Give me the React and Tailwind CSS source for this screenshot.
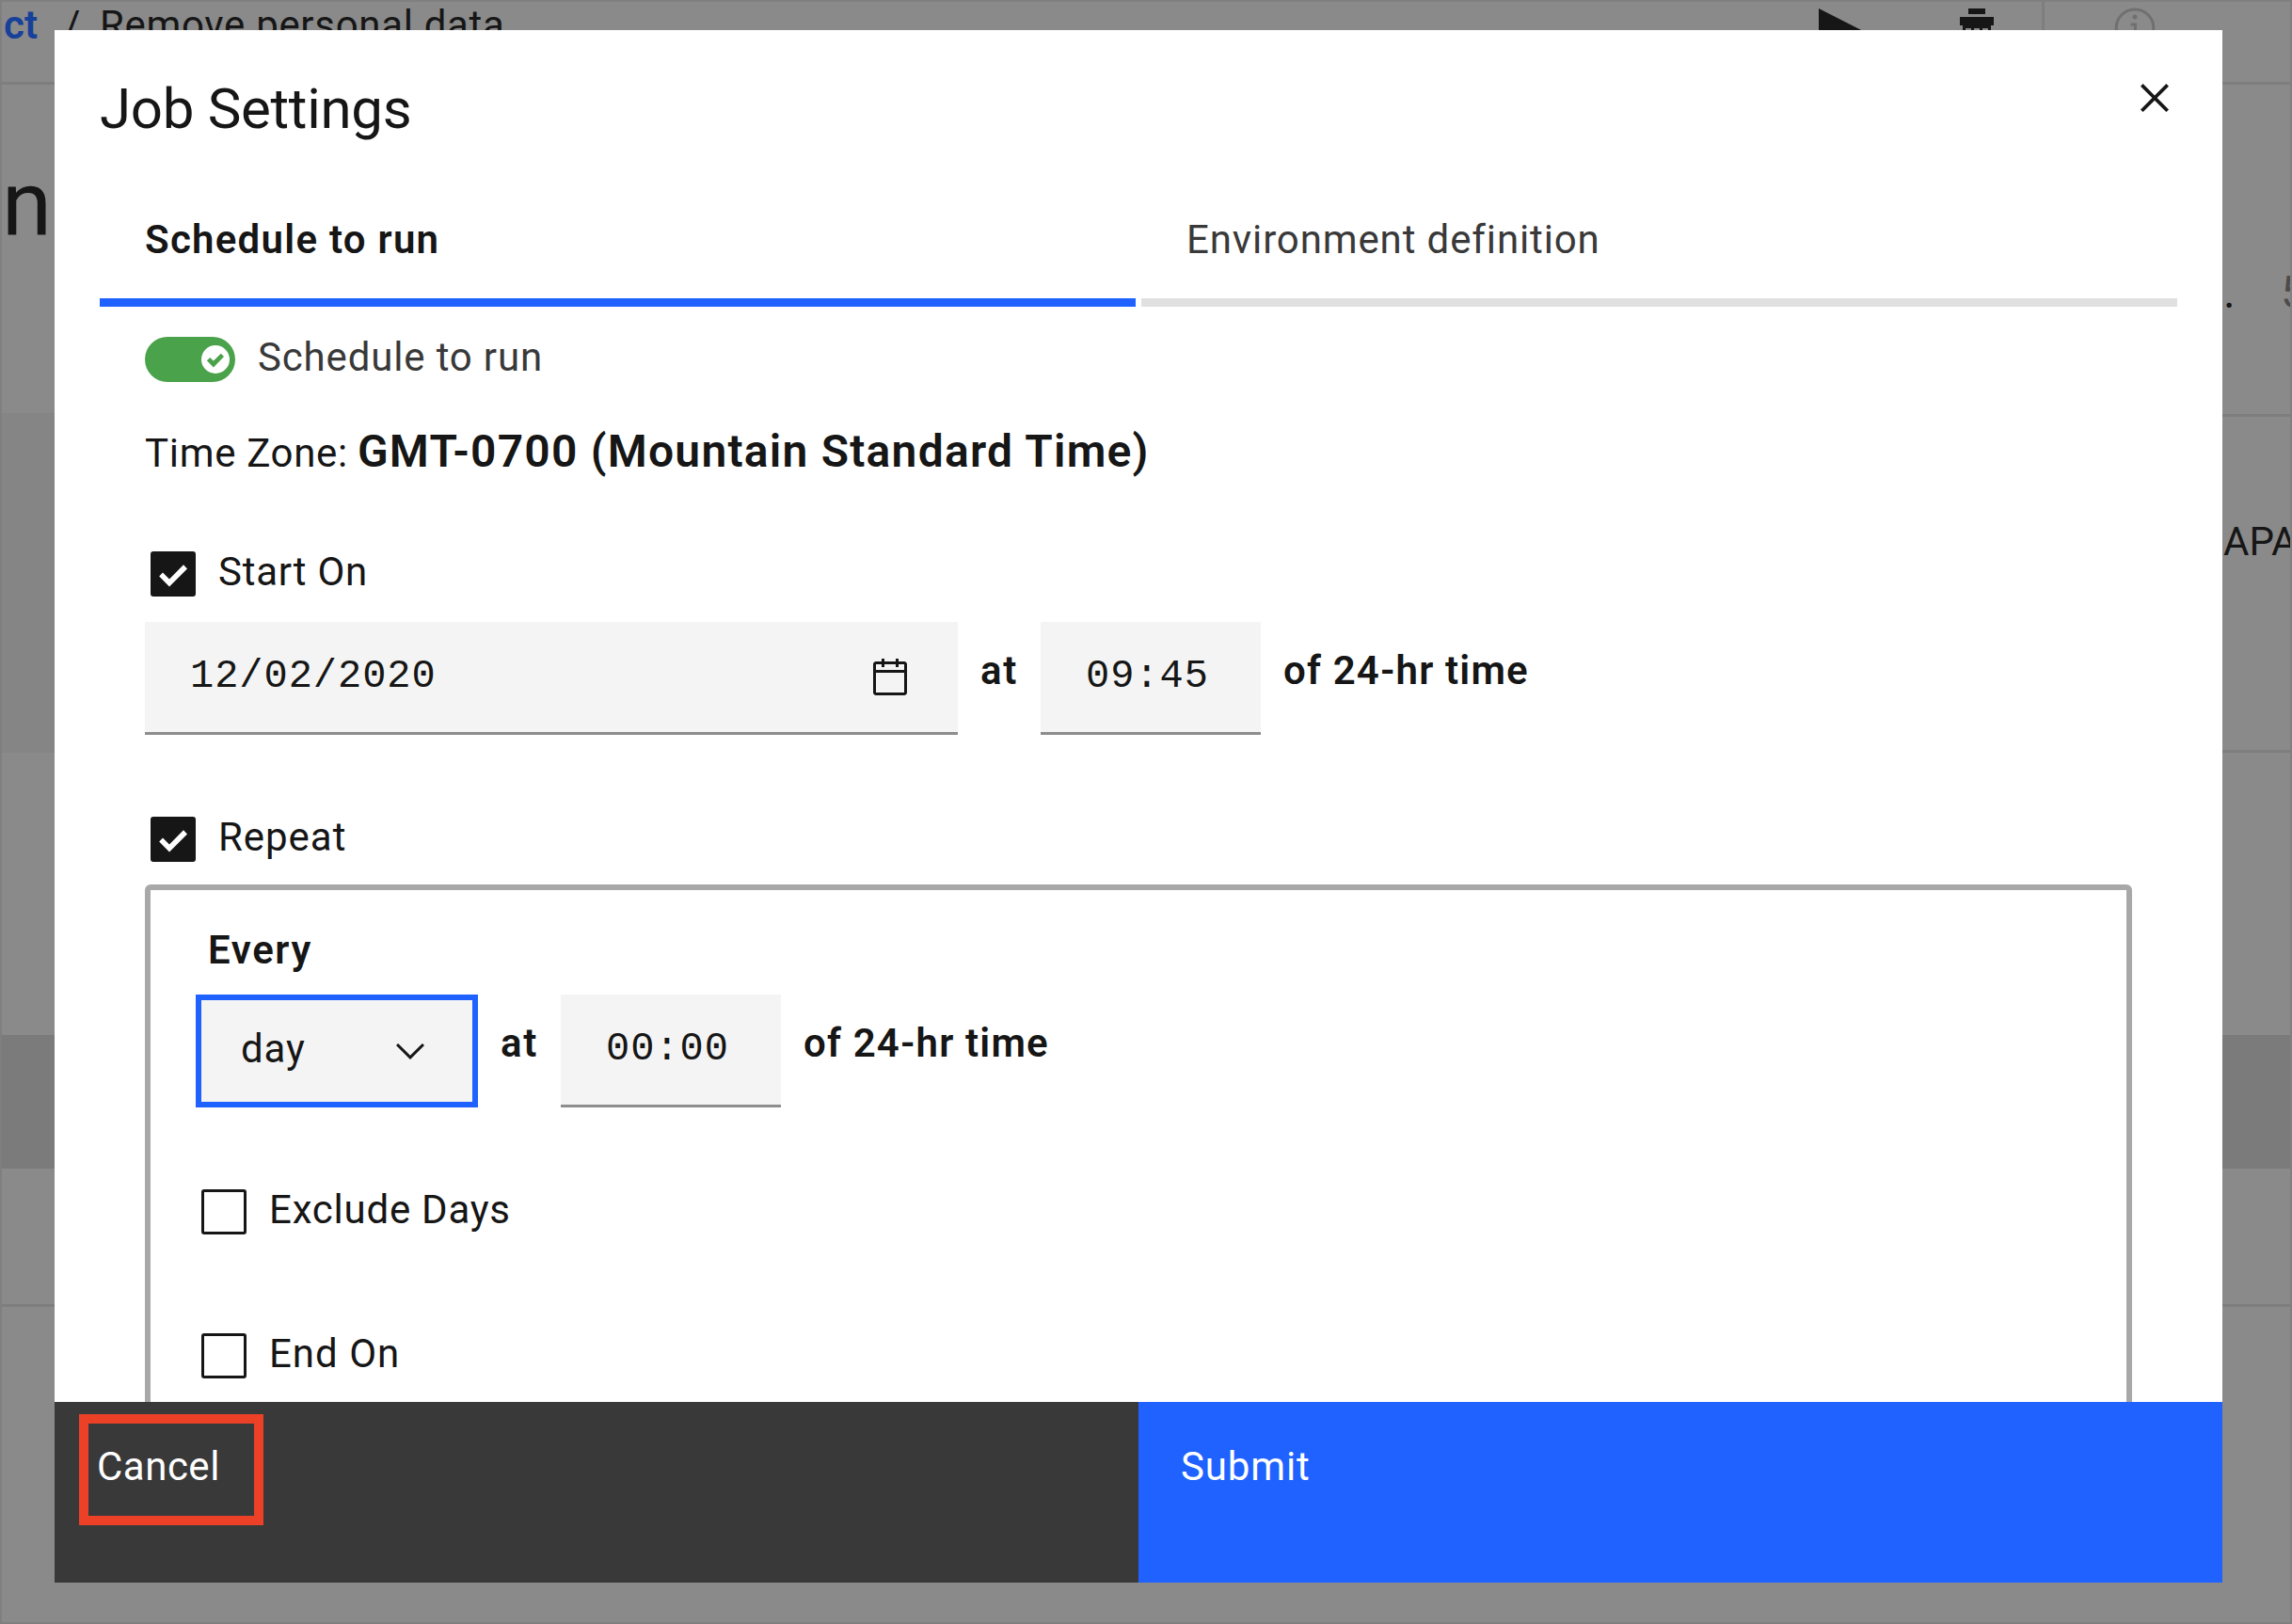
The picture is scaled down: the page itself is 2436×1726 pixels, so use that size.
import React from "react";

function Checkbox({ checked, label, className = "", tracking }) {
  return (
    <div className={`flex h-[54px] items-start gap-6 ${className}`}>
      {checked ? (
        <svg className="mt-[5px] h-12 w-12 shrink-0" viewBox="0 0 48 48">
          <rect width="48" height="48" rx="3" fill="#161616" />
          <path d="M9.2 26.4 13 22.6 20 29.4 35 14.3 39 18.4 20 37.4Z" fill="#fff" />
        </svg>
      ) : (
        <span className="mt-[5px] h-12 w-12 shrink-0 rounded-[3px] border-[3px] border-[#161616]" />
      )}
      <span className={`text-[42px] leading-[54px] ${tracking}`}>{label}</span>
    </div>
  );
}

function TimeInput({ value }) {
  return (
    <div className="flex h-[120px] w-[234px] items-start bg-[#f4f4f4] pt-[31px] pl-12 shadow-[inset_0_-3px_0_#8d8d8d]">
      <span className="font-['Liberation_Mono',monospace] text-[42px] leading-[54px] tracking-[0.96px]">
        {value}
      </span>
    </div>
  );
}

function AtTime({ value }) {
  return (
    <>
      <span className="mt-[25px] w-10 text-[42px] leading-[54px] font-semibold tracking-[1.6px]">at</span>
      <TimeInput value={value} />
      <span className="mt-[25px] text-[42px] leading-[54px] font-semibold tracking-[1.17px]">
        of 24-hr time
      </span>
    </>
  );
}

function PageBehind() {
  return (
    <div className="flex h-full flex-col overflow-hidden border-2 border-[#7f7f7f] bg-[#8a8a8a]">
      <div className="flex h-[88px] shrink-0 items-start border-b-[3px] border-[#7e7e7e]">
        <div className="-mt-0.5 flex pl-0.5 text-[42px] leading-[54px]">
          <span className="w-[64px] font-semibold text-[#17409a]">ct</span>
          <span className="w-[38px]">/</span>
          <span className="tracking-[0.68px]">Remove personal data</span>
        </div>
        <div className="mr-[143px] ml-auto flex items-start">
          <svg className="mt-[7px] h-[60px] w-[60px]" viewBox="0 0 60 60">
            <path d="M0 0 57 29 0 58Z" fill="#161616" />
          </svg>
          <svg className="mt-[7px] ml-[90px] h-[48px] w-9" viewBox="0 0 36 48">
            <path
              d="M9 0h18v6H9zM0 9h36v9h-3v28H3V18H0zM6 21v21h6V21zM15 21v21h6V21zM24 21v21h6V21z"
              fill="#161616"
              fillRule="evenodd"
            />
          </svg>
          <span className="ml-[51px] h-[85px] w-[3px] bg-[#7e7e7e]" />
          <svg className="mt-[5px] ml-[74px] h-[46px] w-11" viewBox="0 0 44 46">
            <circle cx="22" cy="22.7" r="19.8" fill="none" stroke="#707070" strokeWidth="3" />
            <circle cx="22" cy="11" r="2.5" fill="#707070" />
            <path d="M17.5 17.5H24V33h4.5v3h-12v-3H21V20.5h-3.5z" fill="#707070" />
          </svg>
        </div>
      </div>
      <div className="flex h-[349px] shrink-0 items-start justify-between">
        <span className="mt-[73px] text-[96px] leading-[108px]">n</span>
        <div className="mt-[194px] flex w-[71px] overflow-hidden text-[48px] leading-[54px]">
          <span className="w-[61px] shrink-0">.</span>
          <span className="shrink-0 text-[#4c4c4c]">5</span>
        </div>
      </div>
      <div className="flex h-[361px] shrink-0 items-stretch">
        <div className="w-[1200px] bg-[#858585]" />
        <div className="mt-px flex-1 overflow-hidden border-y-[3px] border-[#7e7e7e]">
          <div className="mt-[106px] ml-auto w-[71px] text-[42px] leading-[54px]">APA</div>
        </div>
      </div>
      <div className="mt-[300px] h-[142px] shrink-0 bg-[#7b7b7b]" />
      <div className="mt-[144px] h-[3px] shrink-0 bg-[#7e7e7e]" />
    </div>
  );
}

function Header() {
  return (
    <div className="flex h-[174px] shrink-0 items-start justify-between pl-12">
      <h2 className="mt-12 text-[60px] leading-[72px] tracking-[-0.3px]">Job Settings</h2>
      <svg className="mt-[42px] mr-[42px] h-[60px] w-[60px]" viewBox="0 0 32 32" fill="#161616">
        <path d="M24 9.4 22.6 8 16 14.6 9.4 8 8 9.4 14.6 16 8 22.6 9.4 24 16 17.4 22.6 24 24 22.6 17.4 16z" />
      </svg>
    </div>
  );
}

function Tabs() {
  return (
    <div className="mx-12 grid h-[120px] shrink-0 grid-cols-2 gap-1.5 text-[42px] leading-[54px]">
      <div className="border-b-[9px] border-[#1f62ff] pt-[22px] pl-12 font-semibold tracking-[1.26px]">
        Schedule to run
      </div>
      <div className="border-b-[9px] border-[#e0e0e0] pt-[22px] pl-12 tracking-[0.88px] text-[#393939]">
        Environment definition
      </div>
    </div>
  );
}

function Body() {
  return (
    <div className="flex flex-1 flex-col overflow-hidden pr-24 pl-24 pt-[27px]">
      <div className="flex h-[54px] shrink-0 items-start gap-6">
        <svg className="mt-[5px] h-12 w-24" viewBox="0 0 96 48">
          <rect width="96" height="48" rx="24" fill="#4aa24a" />
          <circle cx="75" cy="24" r="15" fill="#fff" />
          <path d="M65.9 25.3 69.2 22 72.9 25.6 80.8 17.7 84 21 72.9 32.6Z" fill="#4aa24a" />
        </svg>
        <span className="text-[42px] leading-[54px] tracking-[0.84px] text-[#393939]">Schedule to run</span>
      </div>
      <div className="mt-[46px] flex h-[54px] shrink-0 items-baseline gap-2.5 whitespace-nowrap">
        <span className="text-[42px] leading-[54px] tracking-[0.68px]">Time Zone:</span>
        <span className="text-[48px] leading-[54px] font-semibold tracking-[1.23px]">
          GMT-0700 (Mountain Standard Time)
        </span>
      </div>

      <Checkbox checked label="Start On" className="mt-[74px] ml-1.5 shrink-0" tracking="tracking-[0.74px]" />
      <div className="mt-[26px] flex shrink-0 items-start gap-6">
        <div className="flex h-[120px] w-[864px] items-center justify-between bg-[#f4f4f4] px-12 shadow-[inset_0_-3px_0_#8d8d8d]">
          <span className="-mt-1 font-['Liberation_Mono',monospace] text-[42px] leading-[54px] tracking-[0.96px]">
            12/02/2020
          </span>
          <svg className="h-12 w-12" viewBox="0 0 32 32" fill="#161616">
            <path d="M26 4h-4V2h-2v2h-8V2h-2v2H6C4.9 4 4 4.9 4 6v20c0 1.1.9 2 2 2h20c1.1 0 2-.9 2-2V6c0-1.1-.9-2-2-2zm0 22H6V12h20v14zm0-16H6V6h4v2h2V6h8v2h2V6h4v4z" />
          </svg>
        </div>
        <AtTime value="09:45" />
      </div>

      <Checkbox checked label="Repeat" className="mt-[82px] ml-1.5 shrink-0" tracking="tracking-[0.96px]" />
      <div className="mt-[23px] h-[800px] shrink-0 rounded-md border-[6px] border-[#a8a8a8] pt-[37px] pl-12">
        <div className="ml-[13px] text-[42px] leading-[54px] font-semibold tracking-[1.6px]">Every</div>
        <div className="mt-5 flex items-start gap-6">
          <div className="flex h-[120px] w-[300px] items-center justify-between border-[6px] border-[#1f62ff] bg-[#f4f4f4] px-[42px]">
            <span className="-mt-1 text-[42px] leading-[54px] tracking-[0.9px]">day</span>
            <svg className="h-12 w-12" viewBox="0 0 16 16" fill="#161616">
              <path d="M8 11 3 6l.7-.7L8 9.6l4.3-4.3.7.7z" />
            </svg>
          </div>
          <AtTime value="00:00" />
        </div>
        <Checkbox label="Exclude Days" className="mt-[82px] ml-1.5" tracking="tracking-[0.76px]" />
        <Checkbox label="End On" className="mt-[99px] ml-1.5" tracking="tracking-[1px]" />
      </div>
    </div>
  );
}

function Footer() {
  return (
    <div className="grid h-[192px] shrink-0 grid-cols-2 text-[42px] leading-[54px] text-white">
      <div className="relative bg-[#393939] pt-[42px] pl-[45px] tracking-[0.5px]">
        Cancel
        <span className="absolute top-[13px] left-[26px] h-[118px] w-[196px] border-[10px] border-[#ec4027]" />
      </div>
      <div className="bg-[#1f62ff] pt-[42px] pl-[45px] tracking-[0.86px]">Submit</div>
    </div>
  );
}

export default function App() {
  return (
    <div className="relative h-[1726px] w-[2436px] overflow-hidden font-['Roboto',sans-serif] text-[#161616]">
      <PageBehind />
      <div className="absolute top-8 left-[58px] flex h-[1650px] w-[2304px] flex-col overflow-hidden bg-white">
        <Header />
        <Tabs />
        <Body />
        <Footer />
      </div>
    </div>
  );
}
